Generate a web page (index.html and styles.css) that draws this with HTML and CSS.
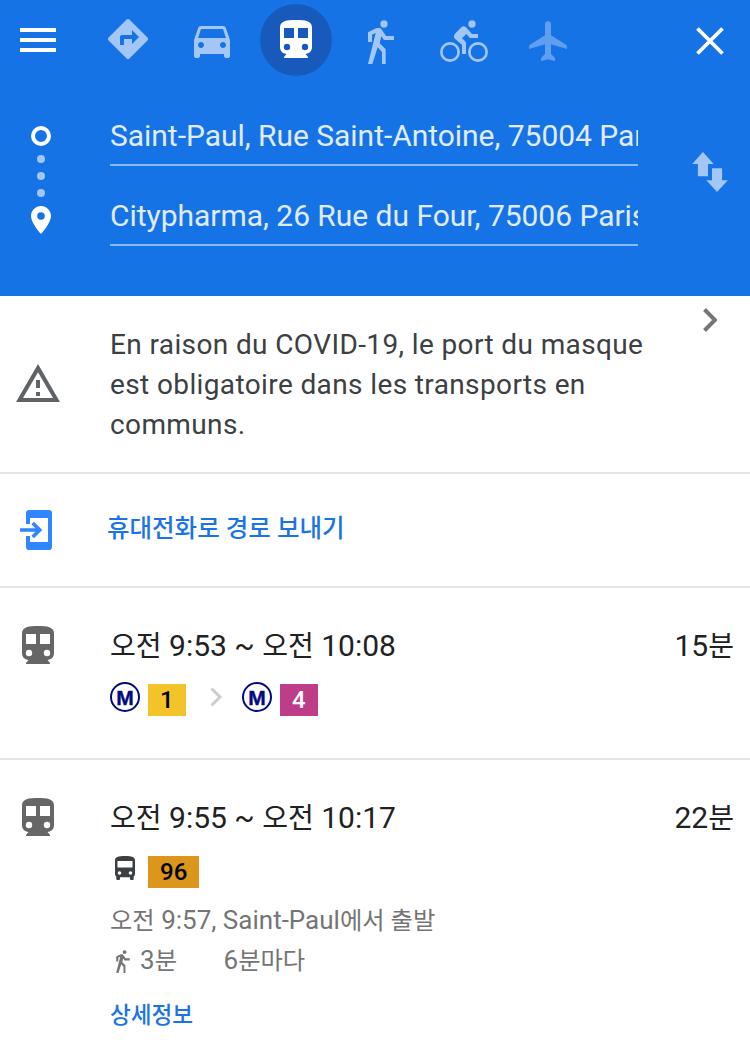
FILE: index.html
```
<!DOCTYPE html>
<html lang="ko">
<head>
<meta charset="utf-8">
<title>Directions</title>
<link rel="stylesheet" href="styles.css">
</head>
<body>
<svg class="defs" width="0" height="0">
  <symbol id="train" viewBox="0 0 32 38"><path fill-rule="evenodd" d="M16 0C7 0 0 .8 0 7.500V27c0 4 2.800 6.700 6.500 7L4 37v1h24v-1l-2.500-3c3.700-.3 6.500-3 6.500-7V7.500C32 .8 25 0 16 0zM4 8h10v10H4zM18 8h10v10H18zM7 23.800a3.200 3.200 0 1 0 0 6.400a3.200 3.200 0 1 0 0-6.400zM25 23.800a3.200 3.200 0 1 0 0 6.400a3.200 3.200 0 1 0 0-6.400z"/></symbol>
  <symbol id="walk" viewBox="354 60 78 132"><circle cx="402" cy="72" r="11"/><path d="M354 97L380 84H388Q393 84 396 90L408 108H432V120H402L394 109L389 130L407 148V192H396V156L383 142L367 192H354L377 99L366 104V126H354z"/></symbol>
</svg>
<header class="header">
  <nav class="modes">
    <div class="menu"><span></span><span></span><span></span></div>
    <div class="mode"><svg class="best" viewBox="2 2 20 20"><path d="M21.710 11.290l-9-9c-.39-.39-1.020-.39-1.410 0l-9 9c-.39.39-.39 1.020 0 1.410l9 9c.39.39 1.020.39 1.410 0l9-9c.39-.38.39-1.010 0-1.410zM14 14.500V12h-4v3H8v-4c0-.55.45-1 1-1h5V7.500l3.500 3.500-3.500 3.500z"/></svg></div>
    <div class="mode"><svg class="car" viewBox="3 5 18 16"><path d="M18.920 6.010C18.720 5.420 18.160 5 17.500 5h-11c-.66 0-1.210.42-1.420 1.010L3 12v8c0 .55.45 1 1 1h1c.55 0 1-.45 1-1v-1h12v1c0 .55.45 1 1 1h1c.55 0 1-.45 1-1v-8l-2.080-5.990zM6.500 16c-.83 0-1.500-.67-1.500-1.500S5.670 13 6.500 13s1.500.67 1.500 1.500S7.330 16 6.500 16zm11 0c-.83 0-1.500-.67-1.500-1.500s.67-1.500 1.500-1.500 1.500.67 1.500 1.500-.67 1.500-1.500 1.500zM5 11l1.500-4.500h11L19 11H5z"/></svg></div>
    <div class="mode"><div class="selected"><svg class="train"><use href="#train"/></svg></div></div>
    <div class="mode"><svg class="walk"><use href="#walk"/></svg></div>
    <div class="mode"><svg class="bike" viewBox="570 60 144 126"><circle cx="666" cy="72" r="11"/><g fill="none" stroke="currentColor" stroke-width="8"><circle cx="600" cy="156" r="26"/><circle cx="684" cy="156" r="26"/></g><path d="M615 101L634 82Q641 76 648 82L666 102H684V114H660L649 102L636 115L644 122Q648 125 648 130V162H636V134L616 118Q608 110 615 101z"/></svg></div>
    <div class="mode"><svg class="plane" viewBox="87 62 114 121"><path d="M135 72a9 9 0 0 1 18 0V105L201 135V147L153 132V162L165 173V183L144 178L123 183V173L135 162V132L87 147V135L135 105z"/></svg></div>
    <svg class="close" viewBox="0 0 28 28"><path d="M1.500 1.500l25 25M26.500 1.500l-25 25" fill="none" stroke="#fff" stroke-width="3.800"/></svg>
  </nav>
  <div class="route">
    <svg class="track" viewBox="0 0 20 108"><circle cx="10" cy="10" r="8" fill="none" stroke="#fff" stroke-width="4"/><g fill="#a2c6f6"><circle cx="10" cy="33" r="4"/><circle cx="10" cy="50" r="4"/><circle cx="10" cy="67" r="4"/></g><path fill="#fff" fill-rule="evenodd" d="M10 80C4.500 80 0 84.500 0 90c0 7 10 18 10 18s10-11 10-18c0-5.500-4.500-10-10-10zm0 6.200a3.800 3.800 0 1 1 0 7.600a3.800 3.800 0 1 1 0-7.600z"/></svg>
    <div class="fields">
      <div class="field">Saint-Paul, Rue Saint-Antoine, 75004 Paris</div>
      <div class="field">Citypharma, 26 Rue du Four, 75006 Paris</div>
    </div>
    <svg class="swap" viewBox="577 156 106 119"><path d="M577 192L609 156L641 192H624V228H594V192zM636 204H666V240H683L651 275L619 240H636z"/></svg>
  </div>
</header>
<section class="row notice">
  <svg class="warn" viewBox="0 0 44 38"><path fill-rule="evenodd" d="M22 0L44 38H0zM22 8.200L7 34H37zM20 16h4v8h-4zM20 28h4v4h-4z"/></svg>
  <p class="notice-text">En raison du COVID-19, le port du masque<br>est obligatoire dans les transports en<br>communs.</p>
  <svg class="more" viewBox="0 0 14 24"><path d="M1.500 1.500L12 12L1.500 22.500" fill="none" stroke="#757575" stroke-width="4"/></svg>
</section>
<section class="row send">
  <svg class="phone" viewBox="60 570 96 120"><path d="M78 612V580Q78 570 88 570H146Q156 570 156 580V680Q156 690 146 690H88Q78 690 78 680V648H90V666H144V594H90V612z"/><path d="M60 630H116M98 609L119 630L98 651" fill="none" stroke="currentColor" stroke-width="11"/></svg>
  <div class="send-text">휴대전화로 경로 보내기</div>
</section>
<section class="row trip first">
  <svg class="train"><use href="#train"/></svg>
  <div class="detail">
    <div class="times"><span class="t"><span class="ko">오전</span> 9:53 ~ <span class="ko">오전</span> 10:08</span><span class="dur">15<span class="ko">분</span></span></div>
    <div class="lines">
      <span class="metro">M</span><span class="badge yellow">1</span>
      <svg class="step" viewBox="0 0 12 20"><path d="M1.500 1.500L10 10L1.500 18.500" fill="none" stroke="#ccc" stroke-width="3"/></svg>
      <span class="metro">M</span><span class="badge pink">4</span>
    </div>
  </div>
</section>
<section class="row trip">
  <svg class="train"><use href="#train"/></svg>
  <div class="detail">
    <div class="times"><span class="t"><span class="ko">오전</span> 9:55 ~ <span class="ko">오전</span> 10:17</span><span class="dur">22<span class="ko">분</span></span></div>
    <div class="lines">
      <svg class="bus" viewBox="0 0 20 24"><path fill-rule="evenodd" d="M10 0C3 0 0 1 0 4.500V18q0 1.500 1.300 2.500V23q0 1 1 1H4q1 0 1-1V21.300H15V23q0 1 1 1h1.700q1 0 1-1V20.500Q20 19.500 20 18V4.500C20 1 17 0 10 0zM2.500 5h15v6.500h-15zM4.500 15.200a1.800 1.800 0 1 0 0 3.600a1.800 1.800 0 1 0 0-3.600zM15.500 15.200a1.800 1.800 0 1 0 0 3.600a1.800 1.800 0 1 0 0-3.600z"/></svg><span class="badge orange">96</span>
    </div>
    <div class="info"><span><span class="ko">오전</span> 9:57, Saint-Paul<span class="ko">에서 출발</span></span></div>
    <div class="info"><svg class="walk small"><use href="#walk"/></svg><span class="walktime">3<span class="ko">분</span></span><span>6<span class="ko">분마다</span></span></div>
    <div class="more-info">상세정보</div>
  </div>
</section>
</body>
</html>
```

FILE: styles.css
```
* { box-sizing: border-box; }
body {
  margin: 0;
  width: 750px;
  height: 1062px;
  overflow: hidden;
  background: #fff;
  font-family: Roboto, "Noto Sans CJK KR", sans-serif;
}
svg { display: block; flex: none; fill: currentColor; }
.defs { display: none; }
.header { height: 296px; background: #1673e6; color: #a2c6f6; }
.modes { display: grid; grid-template-columns: 86px repeat(6, 84px) 160px; height: 118px; align-items: start; }
.mode { display: flex; justify-content: center; }
.menu { display: grid; gap: 6px; padding: 28px 0 0 20px; }
.menu span { width: 36px; height: 4px; background: #fff; }
.best { width: 40px; height: 40px; margin-top: 19px; }
.car { width: 36px; height: 32px; margin-top: 26px; }
.selected { display: flex; justify-content: center; width: 72px; height: 72px; margin-top: 4px; padding-top: 16px; border-radius: 50%; background: #185abc; color: #fff; }
.train { width: 32px; height: 38px; }
.walk { width: 26px; height: 44px; margin: 20px 0 0 2px; }
.bike { width: 48px; height: 42px; margin-top: 20px; }
.plane { width: 38px; height: 40px; margin-top: 21px; color: #609fef; }
.close { width: 28px; height: 28px; margin: 27px 0 0 106px; }
.route { display: flex; align-items: flex-start; }
.track { width: 20px; height: 108px; margin: 8px 59px 0 31px; }
.fields { width: 528px; }
.field { height: 48px; margin-bottom: 32px; border-bottom: 2px solid #8bb9f3; color: #e0ecfc; font-size: 30px; line-height: 36px; letter-spacing: -0.030px; white-space: nowrap; overflow: hidden; }
.swap { width: 36px; height: 40px; margin: 34px 0 0 54px; }
.row { display: flex; align-items: flex-start; border-bottom: 2px solid #e5e5e5; }
.notice { height: 178px; }
.warn { width: 44px; height: 38px; margin: 68px 50px 0 16px; color: #5f6368; }
.notice-text { width: 560px; margin: 29px 0 0; color: #3c4043; font-size: 28px; line-height: 40px; letter-spacing: 0.380px; white-space: nowrap; }
.more { width: 14px; height: 24px; margin: 12px 0 0 33px; }
.send { height: 114px; }
.phone { width: 32px; height: 40px; margin: 36px 55px 0 20px; color: #2f86ff; }
.send-text { margin-top: 37px; color: #1a73e8; font-size: 24.500px; font-weight: 500; line-height: 36px; }
.trip { padding: 38px 16px 0 22px; color: #666; }
.first { height: 172px; }
.trip:last-child { border-bottom: 0; }
.detail { flex: 1; margin-left: 56px; }
.times { display: flex; justify-content: space-between; height: 40px; color: #212121; font-size: 30px; line-height: 40px; }
.ko { font-size: 0.935em; line-height: 1; }
.lines { display: flex; margin-top: 16px; height: 34px; }
.metro { width: 30px; height: 30px; border: 2px solid #000b80; border-radius: 50%; color: #000b80; font: bold 21px/27px "Liberation Sans", sans-serif; text-align: center; -webkit-text-stroke: 0.4px #000b80; }
.badge { height: 32px; margin: 2px 0 0 8px; padding: 0 12px; color: #000; font-size: 24px; font-weight: 500; line-height: 32px; }
.yellow { width: 38px; background: #f2c42a; }
.pink { width: 38px; background: #bd3d89; color: #fff; }
.orange { width: 51px; background: #dc961b; }
.step { width: 12px; height: 20px; margin: 5px 20px 0 24px; }
.bus { width: 20px; height: 24px; margin: 2px 5px 0; color: #3c4043; }
.info { display: flex; height: 40px; color: #757575; font-size: 26px; line-height: 40px; white-space: pre; }
.lines + .info { margin-top: 12px; }
.small { width: 14px; height: 23px; margin: 10px 10px 0 6px; }
.walktime { width: 83.500px; }
.more-info { margin-top: 16px; color: #1a73e8; font-size: 22.600px; font-weight: 500; line-height: 40px; }
```
